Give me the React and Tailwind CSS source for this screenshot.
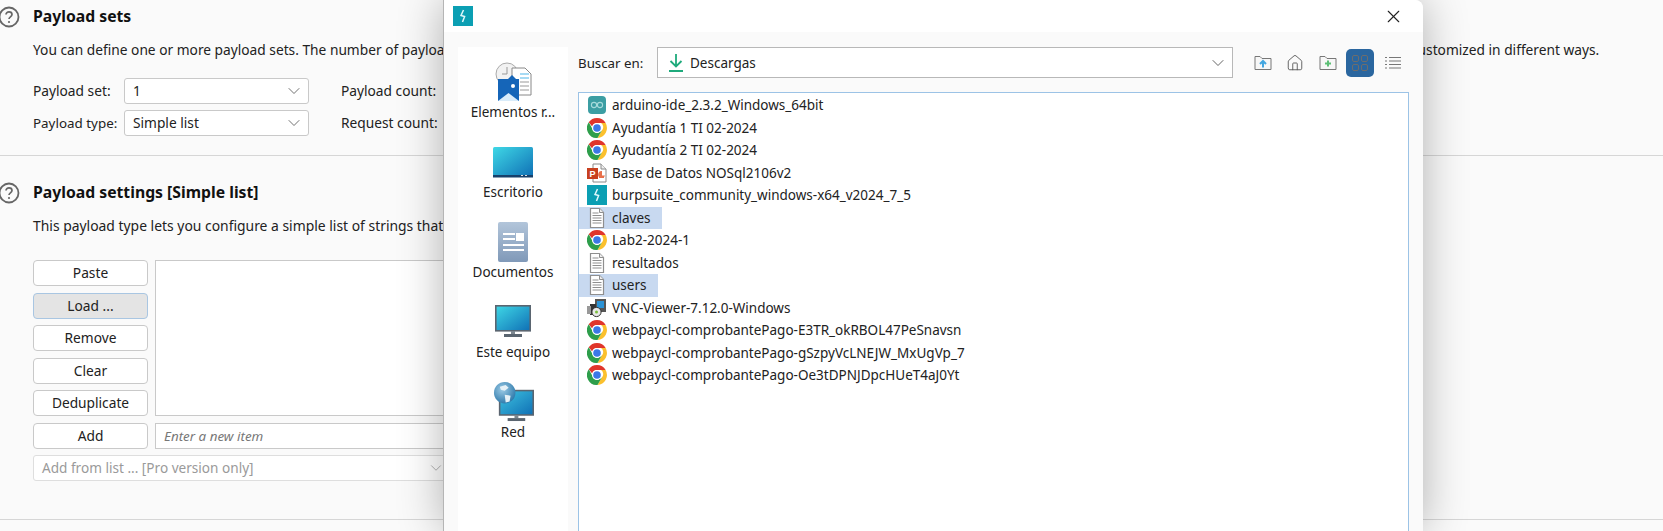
import { ChevronDown, House, X } from "lucide-react";

const uiFont = { fontFamily: '"Noto Sans", sans-serif' };

function HelpIcon() {
  return (
    <svg width="22" height="22" viewBox="0 0 22 22" className="shrink-0">
      <circle cx="11" cy="11" r="9.500" fill="none" stroke="#666" strokeWidth="1.800" />
      <path d="M8 8.600c0-1.800 1.400-2.800 3-2.800s3 1 3 2.600c0 2.400-3 2.400-3 4.600" fill="none" stroke="#666" strokeWidth="1.700" />
      <circle cx="11" cy="16" r="1.100" fill="#666" />
    </svg>
  );
}

function Select({ value }) {
  return (
    <div className="h-[26px] w-[185px] flex items-center justify-between pl-[8px] pr-[4px] bg-white border border-[#c9c9c9] rounded-[3px] text-[#222]">
      <span>{value}</span>
      <ChevronDown size={20} strokeWidth={1} className="text-[#555]" />
    </div>
  );
}

function SideButton({ label, active }) {
  return (
    <div
      className={`h-[26px] w-[115px] flex items-center justify-center pt-[1px] rounded-[4px] border text-[#222] ${
        active ? "bg-[#e4e4e4] border-[#a9c6e2]" : "bg-white border-[#c9c9c9]"
      }`}
    >
      {label}
    </div>
  );
}

function BurpIcon({ size = 20 }) {
  return (
    <svg width={size} height={size} viewBox="0 0 20 20" className="shrink-0">
      <rect width="20" height="20" fill="#0b9fb3" />
      <path d="M10.500 4 8 9.500l3.600 1L9.500 16" fill="none" stroke="#dff7fa" strokeWidth="1.500" />
    </svg>
  );
}

function ChromeIcon() {
  return (
    <svg width="20" height="20" viewBox="4 4 40 40" className="shrink-0">
      <path d="M24 4a20 20 0 0 1 17.300 10H24a10 10 0 0 0-9.600 7.200L7.500 12.600A20 20 0 0 1 24 4z" fill="#e0352b" />
      <path d="M41.300 14A20 20 0 0 1 25 44l8.700-15a10 10 0 0 0-1.600-15z" fill="#fbc02d" />
      <path d="M25 44A20 20 0 0 1 7.500 12.600L16 28a10 10 0 0 0 10 6l7.700-5z" fill="#2e9e4b" />
      <circle cx="24" cy="24" r="10" fill="#fff" />
      <circle cx="24" cy="24" r="7.600" fill="#3b78e7" />
    </svg>
  );
}

function ArduinoIcon() {
  return (
    <svg width="20" height="20" viewBox="0 0 20 20" className="shrink-0">
      <rect x="1" y="1" width="18" height="18" rx="4" fill="#3c9ea3" />
      <circle cx="7" cy="10" r="2.600" fill="none" stroke="#a6dadb" strokeWidth="1.100" />
      <circle cx="13" cy="10" r="2.600" fill="none" stroke="#a6dadb" strokeWidth="1.100" />
    </svg>
  );
}

function PptIcon() {
  return (
    <svg width="20" height="20" viewBox="0 0 20 20" className="shrink-0">
      <path d="M6 1h8l5 5v13H6z" fill="#fff" stroke="#8a8a8a" />
      <path d="M14 1v5h5" fill="#eee" stroke="#8a8a8a" />
      <rect x="0" y="5" width="11" height="11" fill="#c8401f" />
      <text x="2.600" y="14" fontSize="9" fontWeight="700" fill="#fff" fontFamily="Liberation Sans, sans-serif">P</text>
      <path d="M15 8a3.500 3.500 0 1 0 3 4.500h-3z" fill="#e8704a" />
      <rect x="12" y="14" width="5" height="1" fill="#e8704a" />
    </svg>
  );
}

function TextFileIcon() {
  return (
    <svg width="20" height="20" viewBox="0 0 20 20" className="shrink-0">
      <path d="M3.500 .5h9l4 4v15h-13z" fill="#fff" stroke="#8f8f8f" strokeWidth="1.200" />
      <path d="M12.500 .5v4h4" fill="#eee" stroke="#8f8f8f" />
      <path d="M5.500 5h6M5.500 7.500h9M5.500 10h9M5.500 12.500h9M5.500 15h9" stroke="#8f8f8f" />
    </svg>
  );
}

function InstallerIcon() {
  return (
    <svg width="20" height="20" viewBox="0 0 20 20" className="shrink-0">
      <rect x="8" y="1" width="11" height="13" fill="#555" />
      <rect x="10" y="3" width="7" height="7" fill="#2b93d6" />
      <rect x="3" y="6" width="6" height="11" fill="#333" />
      <circle cx="9.500" cy="14" r="4.600" fill="#e8e8e8" stroke="#333" />
      <circle cx="9.500" cy="14" r="1.500" fill="#7bbf3f" />
      <rect x="0" y="8" width="4" height="8" fill="#999" />
    </svg>
  );
}

function RecentIcon() {
  return (
    <svg width="40" height="40" viewBox="0 0 40 40">
      <circle cx="14" cy="12" r="11" fill="#f2f2f2" stroke="#aaa" />
      <path d="M14 5v7H9" fill="none" stroke="#999" />
      <path d="M19 6h13l6 6v21H19z" fill="#fff" stroke="#888" />
      <path d="M27 12h9M27 16h9" stroke="#4cb5e8" />
      <path d="M27 20h9M27 24h9M27 28h9" stroke="#999" />
      <path d="M5 17h10l4-4 4 4h3v22H5z" fill="#1565b8" />
      <path d="M5 39l10.500-8L26 39z" fill="#d9ecfa" />
      <circle cx="20" cy="24" r="2" fill="#fff" />
    </svg>
  );
}

function DesktopIcon() {
  return (
    <svg width="40" height="31" viewBox="0 0 40 31">
      <defs>
        <linearGradient id="desk" x1="0" y1="0" x2="1" y2="1">
          <stop offset="0" stopColor="#3fd8e6" />
          <stop offset="1" stopColor="#0f6fb5" />
        </linearGradient>
      </defs>
      <rect width="40" height="30" rx="1.500" fill="url(#desk)" />
      <rect y="28" width="40" height="2.500" fill="#17406b" />
      <rect x="28" y="28" width="2" height="1" fill="#ddd" />
      <rect x="32" y="28" width="2" height="1" fill="#ddd" />
    </svg>
  );
}

function DocumentsIcon() {
  return (
    <svg width="32" height="40" viewBox="0 0 32 40">
      <defs>
        <linearGradient id="docs" x1="0" y1="0" x2="0" y2="1">
          <stop offset="0" stopColor="#b2c5da" />
          <stop offset="1" stopColor="#8099b8" />
        </linearGradient>
      </defs>
      <rect x="1" width="30" height="40" rx="2" fill="url(#docs)" />
      <rect x="6" y="11" width="12" height="2" fill="#fff" />
      <rect x="6" y="16" width="12" height="2" fill="#fff" />
      <rect x="19" y="11" width="8" height="8" fill="#fff" />
      <rect x="6" y="22" width="21" height="2" fill="#fff" />
      <rect x="6" y="27" width="21" height="2" fill="#fff" />
    </svg>
  );
}

function MonitorIcon() {
  return (
    <svg width="36" height="32" viewBox="0 0 36 32">
      <defs>
        <linearGradient id="mon" x1="0" y1="0" x2="1" y2="1">
          <stop offset="0" stopColor="#3fd8e6" />
          <stop offset="1" stopColor="#0f6fb5" />
        </linearGradient>
      </defs>
      <rect x=".8" y=".8" width="34.400" height="25" fill="url(#mon)" stroke="#5a6570" strokeWidth="1.600" />
      <rect x="16" y="26" width="4" height="3" fill="#7c8790" />
      <rect x="9" y="29" width="18" height="3" fill="#5a6570" />
    </svg>
  );
}

function NetworkIcon() {
  return (
    <svg width="41" height="41" viewBox="0 0 42 42">
      <defs>
        <linearGradient id="net" x1="0" y1="0" x2="1" y2="1">
          <stop offset="0" stopColor="#3fc4e0" />
          <stop offset="1" stopColor="#0f6fb5" />
        </linearGradient>
        <radialGradient id="globe" cx=".4" cy=".35" r=".7">
          <stop offset="0" stopColor="#9ccbe6" />
          <stop offset="1" stopColor="#2a76a8" />
        </radialGradient>
      </defs>
      <rect x="6.800" y="9.800" width="34.400" height="25" fill="url(#net)" stroke="#5a6570" strokeWidth="1.600" />
      <rect x="22" y="35" width="4" height="3" fill="#7c8790" />
      <rect x="15" y="38" width="18" height="3" fill="#5a6570" />
      <circle cx="12" cy="12" r="11" fill="url(#globe)" />
      <path d="M7 6l6-2 3 3-4 3-4-1zM12 14l6 1-1 6-4 1z" fill="#e6f1f7" />
    </svg>
  );
}

function DownloadIcon() {
  return (
    <svg width="16" height="20" viewBox="0 0 16 20">
      <path d="M8 1v12M2.500 8 8 13.500 13.500 8" fill="none" stroke="#1faa7c" strokeWidth="1.800" />
      <path d="M1 18h14" stroke="#1faa7c" strokeWidth="2" />
    </svg>
  );
}

function FolderIcon({ color, plus }) {
  return (
    <svg width="18" height="16" viewBox="0 0 18 16">
      <path d="M1 14.500V1.500h5l2 2h9v11z" fill="#f7f7f7" stroke="#777" />
      {plus ? (
        <path d="M9 5.500v6M6 8.500h6" stroke={color} strokeWidth="2" />
      ) : (
        <path d="M9 12.500V7M6 9l3-3 3 3" fill="none" stroke={color} strokeWidth="2" />
      )}
    </svg>
  );
}

const sideItems = [
  { label: "Elementos r...", icon: <RecentIcon />, box: "pt-[15px]" },
  { label: "Escritorio", icon: <DesktopIcon />, box: "pt-[20px]" },
  { label: "Documentos", icon: <DocumentsIcon />, box: "pt-[15px]" },
  { label: "Este equipo", icon: <MonitorIcon />, box: "pt-[18px]" },
  { label: "Red", icon: <NetworkIcon />, box: "pt-[14px]" },
];

const files = [
  { name: "arduino-ide_2.3.2_Windows_64bit", icon: <ArduinoIcon /> },
  { name: "Ayudantía 1 TI 02-2024", icon: <ChromeIcon /> },
  { name: "Ayudantía 2 TI 02-2024", icon: <ChromeIcon /> },
  { name: "Base de Datos NOSql2106v2", icon: <PptIcon /> },
  { name: "burpsuite_community_windows-x64_v2024_7_5", icon: <BurpIcon /> },
  { name: "claves", icon: <TextFileIcon />, selected: true },
  { name: "Lab2-2024-1", icon: <ChromeIcon /> },
  { name: "resultados", icon: <TextFileIcon /> },
  { name: "users", icon: <TextFileIcon />, selected: true },
  { name: "VNC-Viewer-7.12.0-Windows", icon: <InstallerIcon /> },
  { name: "webpaycl-comprobantePago-E3TR_okRBOL47PeSnavsn", icon: <ChromeIcon /> },
  { name: "webpaycl-comprobantePago-gSzpyVcLNEJW_MxUgVp_7", icon: <ChromeIcon /> },
  { name: "webpaycl-comprobantePago-Oe3tDPNJDpcHUeT4aJ0Yt", icon: <ChromeIcon /> },
];

function FileDialog() {
  return (
    <div className="absolute left-[443px] top-0 w-[980px] h-[531px] flex flex-col bg-[#fafafa] rounded-tr-[8px] border-l border-[#b5b5b5] shadow-[0_0_45px_rgba(0,0,0,0.3)] text-[13.500px]">
      <div className="h-[32px] shrink-0 bg-white flex items-center justify-between pl-[9px] pr-[19px] rounded-tr-[8px]">
        <BurpIcon />
        <X size={21} strokeWidth={1.300} className="text-[#222]" />
      </div>
      <div className="flex flex-1 min-h-0 pt-[15px] pl-[14px] pr-[14px] gap-[10px]">
        <div className="w-[110px] shrink-0 bg-white flex flex-col text-[#222]">
          {sideItems.map((item) => (
            <div key={item.label} className="h-[80px] flex flex-col items-center">
              <div className={`h-[55px] flex items-start justify-center ${item.box}`}>{item.icon}</div>
              <div className="mt-[1px] leading-[18px] whitespace-nowrap">{item.label}</div>
            </div>
          ))}
        </div>
        <div className="flex-1 min-w-0 flex flex-col gap-[14px]">
          <div className="h-[31px] flex items-center text-[#222]">
            <span className="w-[79px] shrink-0 pt-[2px] text-[13.300px]">Buscar en:</span>
            <div className="w-[576px] h-[31px] bg-white border border-[#b8b8b8] flex items-center pl-[10px] pr-[4px] gap-[6px]">
              <DownloadIcon />
              <span className="flex-1 pt-[2px]">Descargas</span>
              <ChevronDown size={20} strokeWidth={1.100} className="text-[#555]" />
            </div>
            <div className="flex items-center ml-[21px]">
              <div className="w-[18px] flex justify-center"><FolderIcon color="#43a6e0" /></div>
              <div className="w-[18px] ml-[14px] flex justify-center"><House size={18} strokeWidth={1.200} className="text-[#555]" /></div>
              <div className="w-[18px] ml-[15px] flex justify-center"><FolderIcon color="#5cbf75" plus /></div>
              <div className="w-[28px] h-[28px] ml-[9px] rounded-[5px] bg-[#2a669f] grid grid-cols-2 gap-[2px] p-[6px]">
                <span className="border border-[#6d6d6d] rounded-[2px]" />
                <span className="border border-[#6d6d6d] rounded-[2px]" />
                <span className="border border-[#6d6d6d] rounded-[2px]" />
                <span className="border border-[#6d6d6d] rounded-[2px]" />
              </div>
              <svg width="16" height="14" viewBox="0 0 16 14" className="ml-[11px]">
                <path d="M0 1.500h2M4 1.500h12M0 5h2M4 5h12M0 8.500h2M4 8.500h12M0 12h2M4 12h12" stroke="#777" />
              </svg>
            </div>
          </div>
          <div className="w-[831px] flex-1 bg-white border border-[#9cc3e6] border-b-0 pt-[1px] text-[#222]">
            {files.map((file) => (
              <div key={file.name} className="h-[22.500px] flex">
                <div className={`flex items-center h-full pl-[8px] pr-[12px] ${file.selected ? "bg-[#c8d9f0]" : ""}`}>
                  <div className="w-[20px] mr-[5px] flex justify-center">{file.icon}</div>
                  <span className="whitespace-nowrap">{file.name}</span>
                </div>
              </div>
            ))}
          </div>
        </div>
      </div>
    </div>
  );
}

export default function App() {
  return (
    <div className="relative w-[1663px] h-[531px] overflow-hidden bg-[#fafafa] text-[13.740px] text-[#222]" style={uiFont}>
      <section className="h-[156px] border-b border-[#d6d6d6] pt-[6px]">
        <div className="flex items-center h-[22px] -ml-[2px] gap-[13px]">
          <HelpIcon />
          <h2 className="text-[15.750px] font-bold text-[#111]">Payload sets</h2>
        </div>
        <p className="pl-[33px] mt-[12px] leading-[20px] whitespace-nowrap">
          You can define one or more payload sets. The number of payload sets depends on the attack type defined in the Positions tab. Various payload types are available for each payload set, and each payload type can be customized in different ways.
        </p>
        <div className="pl-[33px] mt-[18px] flex flex-col gap-[6px]">
          <div className="flex items-center h-[26px]">
            <span className="w-[91px]">Payload set:</span>
            <Select value="1" />
            <span className="ml-[32px]">Payload count:</span>
          </div>
          <div className="flex items-center h-[26px]">
            <span className="w-[91px] text-[13.400px]">Payload type:</span>
            <Select value="Simple list" />
            <span className="ml-[32px]">Request count:</span>
          </div>
        </div>
      </section>
      <section className="h-[364px] border-b border-[#d6d6d6] pt-[26px]">
        <div className="flex items-center h-[22px] -ml-[2px] gap-[13px]">
          <HelpIcon />
          <h2 className="text-[15.750px] font-bold text-[#111]">Payload settings [Simple list]</h2>
        </div>
        <p className="pl-[33px] mt-[12px] leading-[20px] whitespace-nowrap text-[13.900px]">
          This payload type lets you configure a simple list of strings that are used as payloads.
        </p>
        <div className="pl-[33px] mt-[24px] w-[452px] flex flex-col gap-[6px]">
          <div className="flex gap-[7px] h-[156px]">
            <div className="flex flex-col gap-[6.500px]">
              <SideButton label="Paste" />
              <SideButton label="Load ..." active />
              <SideButton label="Remove" />
              <SideButton label="Clear" />
              <SideButton label="Deduplicate" />
            </div>
            <div className="flex-1 bg-white border border-[#c9c9c9]" />
          </div>
          <div className="flex gap-[7px] mt-[1px]">
            <SideButton label="Add" />
            <div className="flex-1 h-[26px] bg-white border border-[#c9c9c9] flex items-center pl-[8px] italic text-[13.400px] text-[#777]">
              Enter a new item
            </div>
          </div>
          <div className="h-[26px] bg-white border border-[#dedede] rounded-[3px] flex items-center justify-between pl-[8px] pr-[6px] text-[13.600px] text-[#9a9a9a]">
            <span>Add from list ... [Pro version only]</span>
            <ChevronDown size={18} strokeWidth={1} className="text-[#999]" />
          </div>
        </div>
      </section>
      <FileDialog />
    </div>
  );
}
